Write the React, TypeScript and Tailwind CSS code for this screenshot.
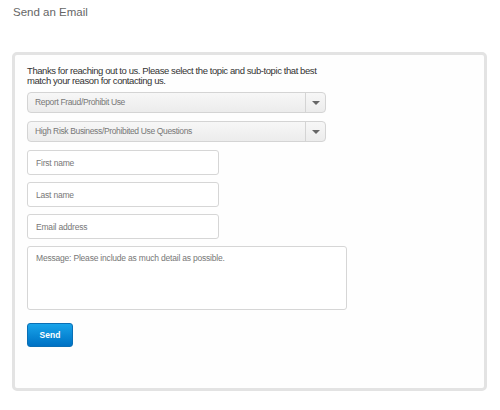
import { useState } from 'react';

function SelectBox({ value }: { value: string }) {
  return (
    <div className="flex h-[21px] w-[299px] items-stretch rounded-[4px] border border-[#d4d4d4] bg-gradient-to-b from-[#f7f7f7] to-[#ececec]">
      <div className="flex flex-1 items-center pl-[7px] text-[8.5px] tracking-[-0.35px] text-[#777]">{value}</div>
      <div className="flex w-[20px] items-center justify-center border-l border-[#d4d4d4]">
        <span className="h-0 w-0 border-x-[4px] border-t-[4px] border-x-transparent border-t-[#666]" />
      </div>
    </div>
  );
}

function Field({ placeholder }: { placeholder: string }) {
  const [v, setV] = useState('');
  return (
    <input
      value={v}
      onChange={(e) => setV(e.target.value)}
      placeholder={placeholder}
      className="h-[25px] w-[192px] rounded-[3px] border border-[#d6d6d6] bg-white px-[8px] text-[8.5px] tracking-[-0.2px] text-[#333] placeholder:text-[#777] outline-none"
    />
  );
}

export default function App() {
  return (
    <div className="min-h-[410px] w-[500px] bg-white font-['Liberation_Sans',Arial,sans-serif]">
      <h1 className="pl-[13px] pt-[5px] text-[11.5px] leading-[14px] text-[#666]">Send an Email</h1>
      <div className="ml-[12px] mt-[33px] h-[339px] w-[475px] rounded-[5px] border-[3px] border-[#e3e3e3] bg-[#fefefe] px-[12px] pt-[11px]">
        <p className="text-[9.5px] leading-[10px] tracking-[-0.42px] text-[#333]">
          Thanks for reaching out to us. Please select the topic and sub-topic that best
          <br />
          match your reason for contacting us.
        </p>
        <div className="mt-[6px] flex flex-col gap-[8px]">
          <SelectBox value="Report Fraud/Prohibit Use" />
          <SelectBox value="High Risk Business/Prohibited Use Questions" />
        </div>
        <div className="mt-[8px] flex flex-col gap-[7px]">
          <Field placeholder="First name" />
          <Field placeholder="Last name" />
          <Field placeholder="Email address" />
          <textarea
            placeholder="Message: Please include as much detail as possible."
            className="h-[64px] w-[320px] resize-none rounded-[3px] border border-[#d6d6d6] bg-white px-[8px] py-[5px] text-[8.5px] tracking-[-0.2px] text-[#333] placeholder:text-[#777] outline-none"
          />
        </div>
        <button className="mt-[13px] h-[24px] w-[46px] rounded-[3px] border border-[#0a6fb5] bg-gradient-to-b from-[#19a4ea] to-[#0071c4] text-[8.5px] font-bold text-white">
          Send
        </button>
      </div>
    </div>
  );
}
